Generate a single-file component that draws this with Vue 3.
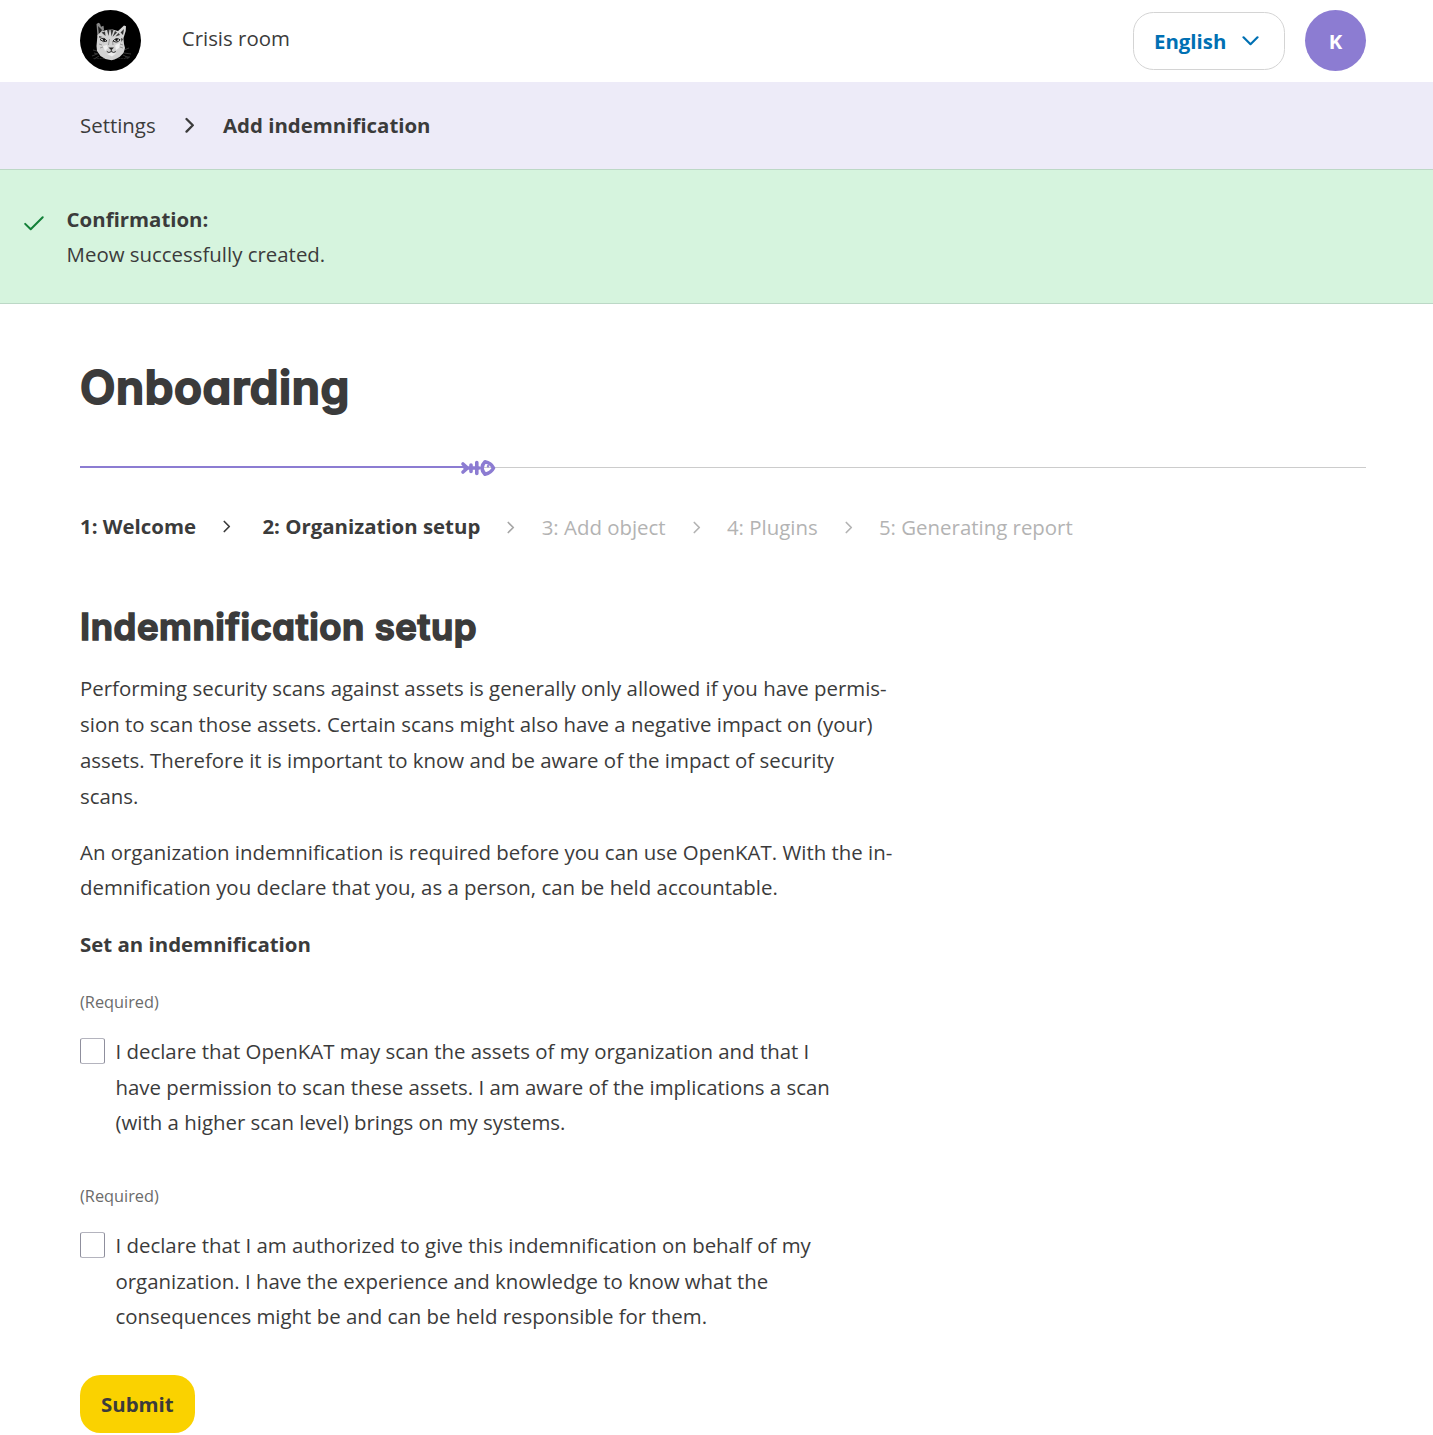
<script setup>
const steps = [
  { label: '1: Welcome', done: true },
  { label: '2: Organization setup', done: true },
  { label: '3: Add object', done: false },
  { label: '4: Plugins', done: false },
  { label: '5: Generating report', done: false },
]

const declarations = [
  [
    'I declare that OpenKAT may scan the assets of my organization and that I',
    'have permission to scan these assets. I am aware of the implications a scan',
    '(with a higher scan level) brings on my systems.',
  ],
  [
    'I declare that I am authorized to give this indemnification on behalf of my',
    'organization. I have the experience and knowledge to know what the',
    'consequences might be and can be held responsible for them.',
  ],
]
</script>

<template>
  <div class="page">
    <header class="topbar">
      <svg class="logo" viewBox="0 0 61 61" aria-label="OpenKAT">
        <circle cx="30.5" cy="30.5" r="30.5" fill="#000" />
        <path d="M17 41l-4-1M17 44l-5 2M19 46l-5 3M44 40l5-2M44 43l7 1M43 45l6 3M14 43l4 1M45 47l5 0" stroke="#3c3c3c" stroke-width=".9" fill="none" />
        <path d="M13.500 48.500h35" stroke="#2c2c2c" stroke-width="1" stroke-dasharray="1 .6" />
        <!-- ears -->
        <path d="M16.500 14l2-1.200 1.500 1 1 3 2.500-1 .5 4-3.500 6-3 1z" fill="#8a8a8a" />
        <path d="M18 16l4 4-3 5z" fill="#222" />
        <path d="M37 22l7-6.500 2 .8-.3 4.700-2.700 8.500-5-4z" fill="#d8d8d8" />
        <path d="M40.500 22.500l3.500-3.500-1 6z" fill="#333" />
        <!-- face -->
        <path d="M17.500 25l4-3.500 5-1.500 6-.5 5.500 1.500 3.500 3 2 5 .5 5 1 4-1.500 5-4 4-5 2.500-3 .8-6-1.300-5-3-3.500-5-.5-5z" fill="#d2d2d2" />
        <path d="M27 20l1.500 6 1-6zM30.500 19.500l1 7 2-6.500zM35 21l-2.500 6 4.500-4.500zM38.500 23l-3 3.500 4.500-1.500zM21.500 22.500l4 3.500-.5-4.500zM19 26l3.500 1-3 1zM41 28l2 1-1.500 3z" fill="#3a3a3a" />
        <path d="M20 29.500q3.500-3 7 1.500-3.500 2-7-1.500zM33 31q3.500-4 7-1.200-2.500 3.700-7 1.200z" fill="#f4f4f4" stroke="#1a1a1a" stroke-width="1" />
        <circle cx="24" cy="29.800" r="1.300" fill="#111" />
        <circle cx="36.500" cy="29.800" r="1.300" fill="#111" />
        <path d="M29.500 29l-1 6M32.500 31l.5 4M40 34l3 1M40 37l3 1M19 34l3 1M20 38l3-1M35 35l2 2" stroke="#909090" stroke-width=".9" fill="none" />
        <path d="M23 36l4-1 1 3-3 3zM35 35l5-2-1 5-3 2zM27 44l4-1.500 5 1-4 3z" fill="#f0f0f0" />
        <path d="M28.500 37.500h5.500l-2.700 2.700z" fill="#222" />
        <path d="M31.300 40v1.500M31.300 41.500q-2.500 2-4.500 0M31.300 41.500q2.500 2 4.500 0" stroke="#333" stroke-width="1" fill="none" />
      </svg>
      <a class="nav-link">Crisis room</a>
      <button class="language" type="button">
        English
        <svg width="17" height="10" viewBox="0 0 17 10"><path d="M1.500 1.300l7 6.900 7-6.900" fill="none" stroke="currentColor" stroke-width="2.200" stroke-linecap="round" stroke-linejoin="round" /></svg>
      </button>
      <span class="avatar">K</span>
    </header>

    <nav class="breadcrumbs">
      <span>Settings</span>
      <svg width="10" height="17" viewBox="0 0 10 17"><path d="M1.500 2l6.300 6.300-6.300 6.300" fill="none" stroke="currentColor" stroke-width="2.300" stroke-linecap="round" stroke-linejoin="round" /></svg>
      <strong>Add indemnification</strong>
    </nav>

    <div class="alert" role="status">
      <svg width="20" height="16" viewBox="0 0 20 16"><path d="M1.200 7.900l5.500 5.400 12-12" fill="none" stroke="currentColor" stroke-width="2" stroke-linecap="round" stroke-linejoin="round" /></svg>
      <div>
        <strong>Confirmation:</strong>
        <p>Meow successfully created.</p>
      </div>
    </div>

    <main>
      <h1>Onboarding</h1>

      <div class="progress">
        <div class="progress-done"></div>
        <svg class="fish" width="36" height="18" viewBox="0 0 36 18" fill="none" stroke="#8c7cd2" stroke-width="3.600" stroke-linecap="round" stroke-linejoin="round">
          <path d="M3 5l4.500 4-4.500 4M5 9h14M11 6v6.500M16.800 3.500v11" />
          <path d="M25 2.800q-6 6 0 12.500 6-1.300 8.500-6.300Q31 3.800 25 2.800z" />
          <circle cx="28" cy="7.300" r=".5" stroke-width="1.500" />
        </svg>
      </div>

      <ol class="steps">
        <li v-for="step in steps" :key="step.label" :class="{ done: step.done }">
          <span>{{ step.label }}</span>
          <svg width="8" height="13" viewBox="0 0 8 13"><path d="M1.300 1.500l5 5-5 5" fill="none" stroke="currentColor" stroke-width="1.700" stroke-linecap="round" stroke-linejoin="round" /></svg>
        </li>
      </ol>

      <h2>Indemnification setup</h2>
      <p class="copy">
        Performing security scans against assets is generally only allowed if you have permis-<br />
        sion to scan those assets. Certain scans might also have a negative impact on (your)<br />
        assets. Therefore it is important to know and be aware of the impact of security<br />
        scans.
      </p>
      <p class="copy">
        An organization indemnification is required before you can use OpenKAT. With the in-<br />
        demnification you declare that you, as a person, can be held accountable.
      </p>

      <form>
        <p class="legend">Set an indemnification</p>
        <div v-for="(lines, i) in declarations" :key="i" class="field">
          <span class="required">(Required)</span>
          <label>
            <input type="checkbox" />
            <span><template v-for="line in lines" :key="line">{{ line }}<br /></template></span>
          </label>
        </div>
        <button class="submit" type="submit">Submit</button>
      </form>
    </main>
  </div>
</template>

<style>
body {
  margin: 0;
  background: #fff;
}
</style>

<style scoped>
.page {
  height: 1435px;
  overflow: hidden;
  font-family: "Open Sans", "Noto Sans", sans-serif;
  font-size: 20.420px;
  line-height: 35.700px;
  color: #3b3b3b;
}
p, h1, h2, ol {
  margin: 0;
  padding: 0;
}
svg {
  display: block;
  flex: none;
}

.topbar {
  display: flex;
  align-items: center;
  box-sizing: border-box;
  height: 82px;
  padding: 0 67px 0 80px;
}
.logo {
  width: 61px;
  height: 61px;
  margin-top: -1px;
}
.nav-link {
  margin: -5px auto 0 40.800px;
}
button {
  font: inherit;
  font-weight: 700;
}
.language {
  display: flex;
  align-items: center;
  box-sizing: border-box;
  width: 152px;
  height: 58px;
  padding: 2px 0 0 20px;
  border: 1px solid #d4d4d4;
  border-radius: 20.400px;
  background: #fff;
  color: #0070b3;
}
.language svg {
  margin: -3px 0 0 16px;
}
.avatar {
  width: 61px;
  height: 61px;
  margin: -1px 0 0 20px;
  border-radius: 50%;
  background: #8c7cd2;
  color: #fff;
  font-weight: 700;
  line-height: 63px;
  text-align: center;
}

.breadcrumbs {
  display: flex;
  align-items: center;
  height: 87px;
  padding-left: 80px;
  background: #edebf8;
}
.breadcrumbs svg {
  margin: 0 28.100px 0 29.200px;
}

.alert {
  display: flex;
  box-sizing: border-box;
  height: 135px;
  padding: 32px 24px 0;
  border-top: 1px solid #bcd8c6;
  border-bottom: 1px solid #bcd8c6;
  background: #d6f4de;
}
.alert svg {
  margin: 13.500px 22.600px 0 0;
  color: #128038;
}
.alert p {
  margin-top: -.7px;
}

main {
  padding: 0 67px 0 80px;
}
h1, h2 {
  font-family: Inter, "Open Sans", sans-serif;
  font-weight: 600;
  font-feature-settings: "cv11";
  -webkit-text-stroke: 2px #3b3b3b;
}
h1 {
  padding-top: 56px;
  font-size: 46px;
  line-height: 55px;
  letter-spacing: .600px;
}

.progress {
  position: relative;
  height: 1px;
  margin-top: 52px;
  background: #ccc;
}
.progress-done {
  position: absolute;
  left: 0;
  top: -1px;
  width: 384px;
  height: 2px;
  background: #8c7cd2;
}
.fish {
  position: absolute;
  left: 380px;
  top: -8.500px;
}

.steps {
  display: flex;
  margin-top: 41px;
  list-style: none;
}
.steps li {
  display: flex;
  align-items: center;
  color: #b3b3b3;
}
.steps span {
  padding-top: 1px;
}
.steps .done {
  color: #3b3b3b;
  font-weight: 700;
}
.steps .done span {
  padding: 0 0 1px;
}
.steps svg {
  margin: 0 26.400px 0 26.900px;
}
.steps li:nth-child(2) svg {
  margin: 0 26.400px 0 27px;
  color: #a6a6a6;
}
.steps li:first-child svg {
  margin: -2px 31.400px 0 27px;
}
.steps li:last-child svg {
  display: none;
}

h2 {
  margin-top: 58.500px;
  padding-bottom: 21.230px;
  font-size: 36.500px;
  line-height: 46px;
  letter-spacing: .560px;
  -webkit-text-stroke-width: 1.700px;
}
.copy {
  margin-bottom: 20.400px;
}
.legend {
  margin: 20.720px 0 25.500px;
  font-weight: 700;
}
.field {
  margin-bottom: 41.040px;
}
.required {
  display: block;
  margin-bottom: 17.300px;
  color: #6b6b6b;
  font-size: 16.320px;
  line-height: 28.560px;
}
label {
  display: flex;
  align-items: flex-start;
}
input {
  appearance: none;
  flex: none;
  box-sizing: border-box;
  width: 25px;
  height: 26px;
  margin: 4px 10.500px 0 0;
  border: 1px solid #8f8f9d;
  border-top-color: #b4b4be;
  border-bottom-color: #b4b4be;
  border-radius: 2.500px;
  background: #fff;
}
.submit {
  display: block;
  height: 58px;
  margin: -1px 0 0;
  padding: 2px 21px 0;
  border: 0;
  border-radius: 20.400px;
  background: #fad200;
  color: #3b3b3b;
}
</style>
